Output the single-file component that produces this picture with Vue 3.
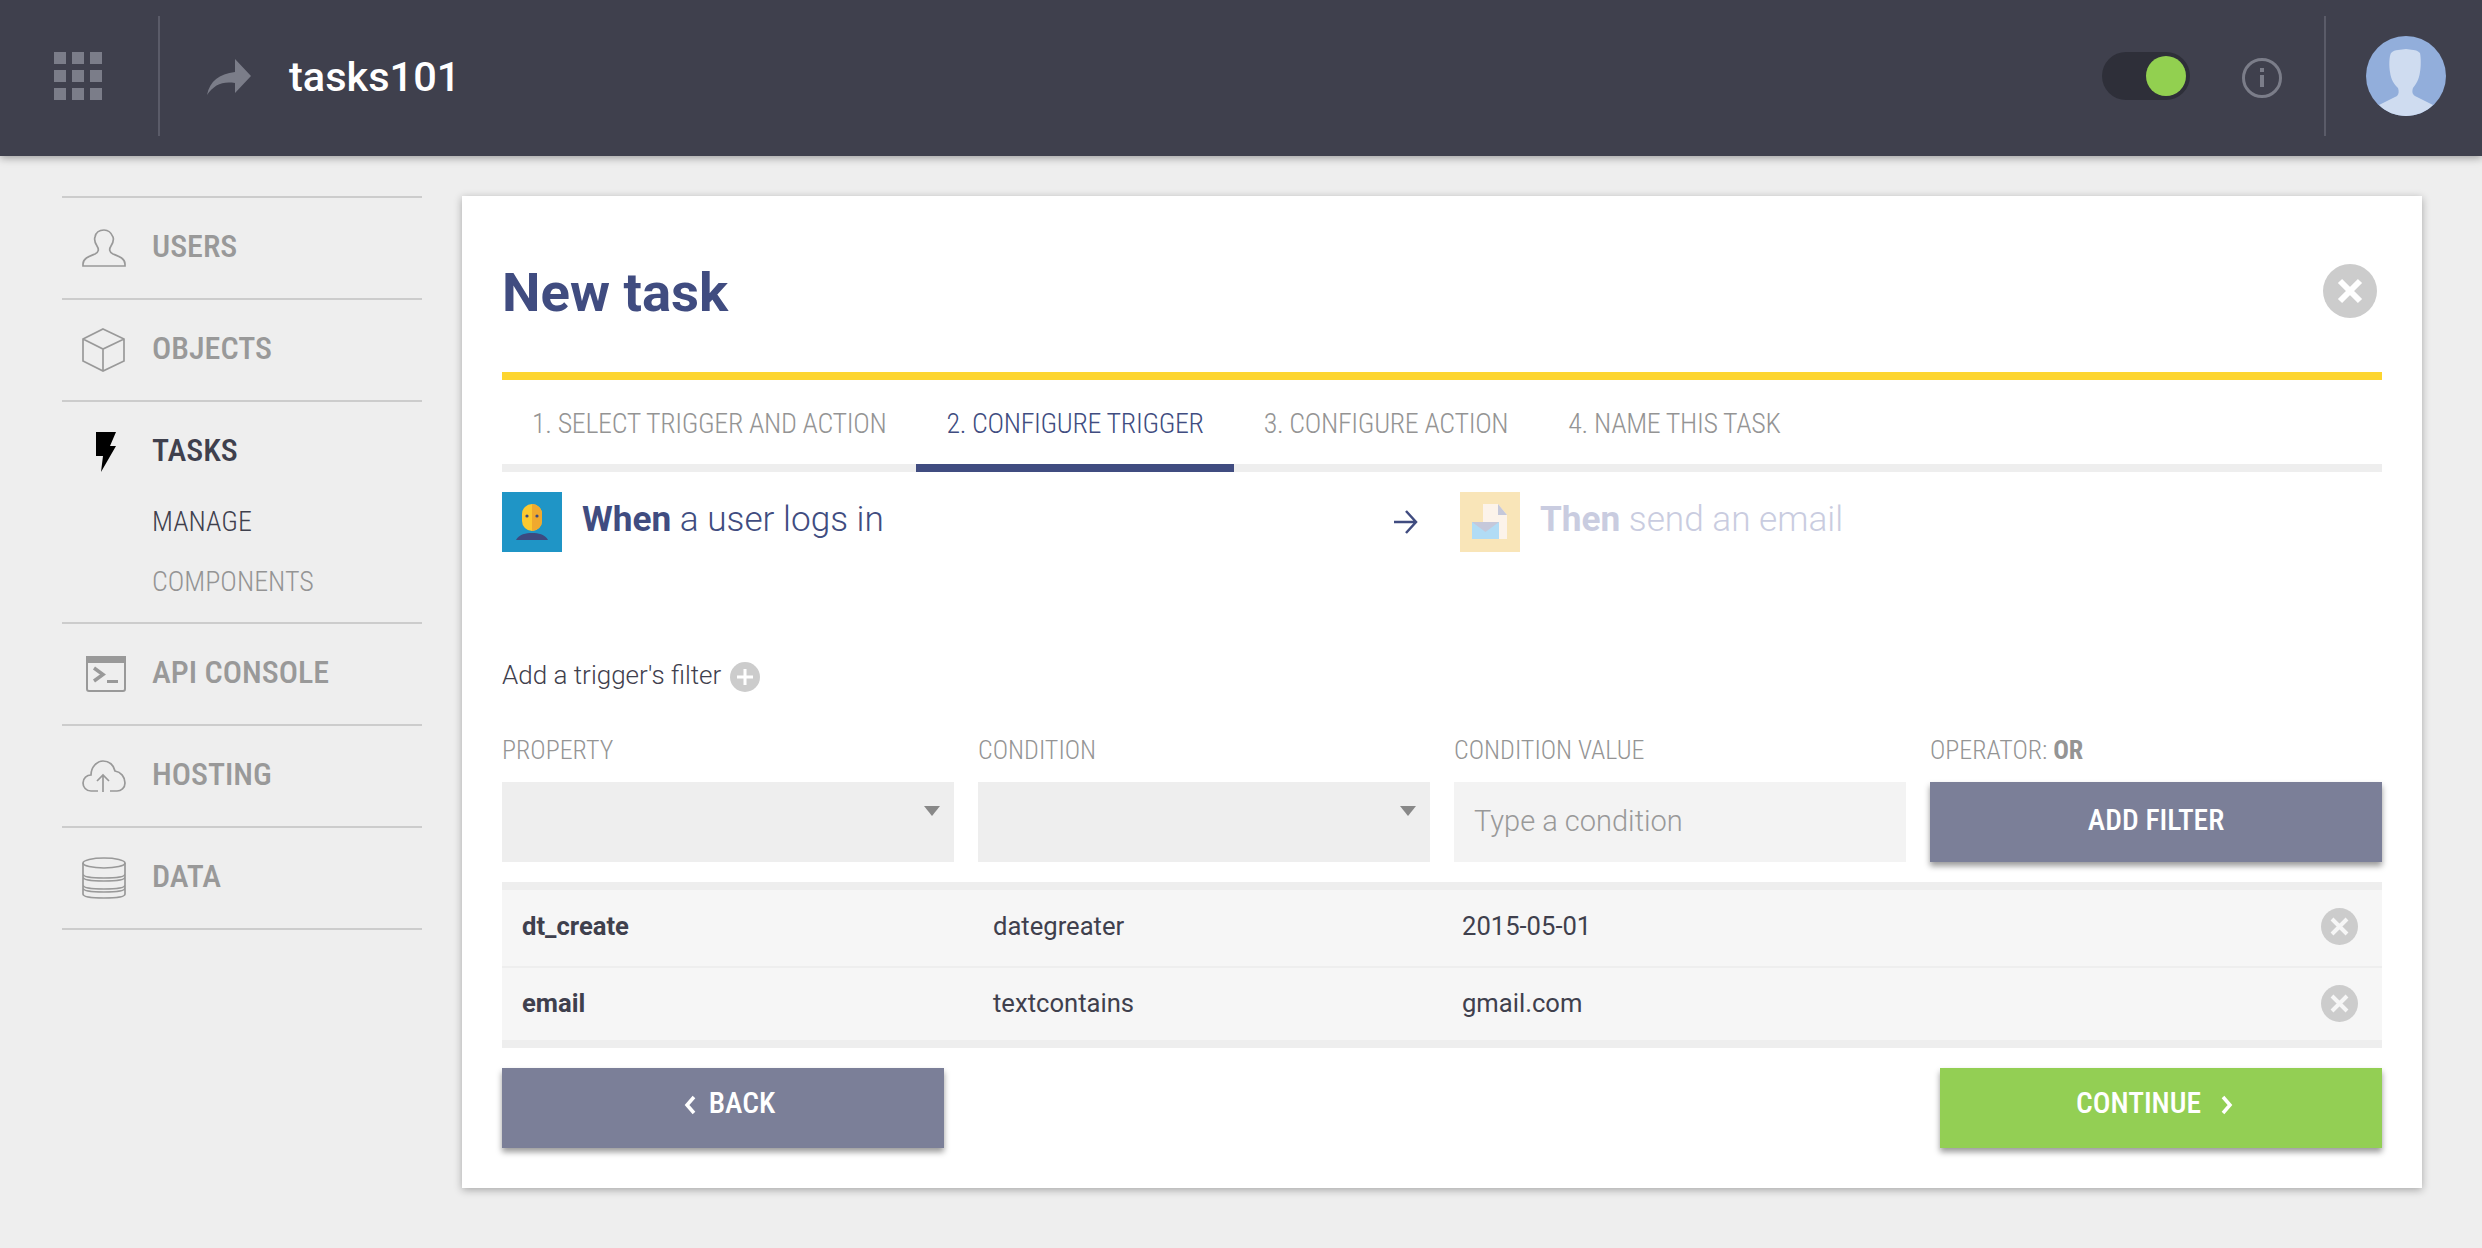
<script setup>
const rows = [
  { prop: 'dt_create', cond: 'dategreater', val: '2015-05-01' },
  { prop: 'email', cond: 'textcontains', val: 'gmail.com' }
]
const tabs = ['1. SELECT TRIGGER AND ACTION', '2. CONFIGURE TRIGGER', '3. CONFIGURE ACTION', '4. NAME THIS TASK']
</script>

<template>
  <div class="page">
    <header class="top">
      <div class="grid-btn">
        <div class="dots"><i v-for="n in 9" :key="n"></i></div>
      </div>
      <div class="crumb">
        <svg class="share" width="44" height="36" viewBox="0 0 44 36"><path d="M0 36C3 22 12 15 28 13V0L44 17 28 34V24C15 22 7 26 0 36Z" fill="#7b7d89"/></svg>
        <span class="app-name">tasks101</span>
      </div>
      <div class="toggle"><span class="knob"></span></div>
      <svg class="info" width="40" height="40" viewBox="0 0 40 40"><circle cx="20" cy="20" r="18.5" fill="none" stroke="#7b7d89" stroke-width="3"/><rect x="18" y="17" width="4" height="12" fill="#7b7d89"/><rect x="18" y="10" width="4" height="4" fill="#7b7d89"/></svg>
      <div class="user">
        <svg width="80" height="80" viewBox="0 0 80 80"><circle cx="40" cy="40" r="40" fill="#92aedb"/><path d="M13 69L31 60C33 58 33 55 32 52 28 48 25 44 24 36 23 30 23 21 25 17 29 13 35 14 40 13 45 14 50 13 54 17 55 22 55 30 54 36 53 44 50 48 47 52 46 55 46 58 49 60L67 69C60 76 50 80 40 80 30 80 20 76 13 69Z" fill="#cfdcf0"/></svg>
      </div>
    </header>

    <div class="body">
      <nav class="side">
        <div class="item">
          <svg class="ico" width="44" height="38" viewBox="0 0 44 38" fill="none" stroke="#999" stroke-width="1.7"><path d="M1 37H43V35C43 29 36 27 31 25 27 23 27 20 29 17 31 14 32 11 31 8 29 3 26 1 22 1 18 1 14 3 13 8 12 11 13 14 15 17 17 20 17 23 13 25 8 27 1 29 1 35Z"/></svg>
          <span class="label">USERS</span>
        </div>
        <div class="item">
          <svg class="ico" width="44" height="44" viewBox="0 0 44 44" fill="none" stroke="#999" stroke-width="1.7"><path d="M21 1L42 11V33L21 43 1 33V11ZM1 11L21 21 42 11M21 21V43"/></svg>
          <span class="label">OBJECTS</span>
        </div>
        <div class="item open">
          <div class="item-head">
            <svg class="ico" width="44" height="40" viewBox="0 0 44 40"><path d="M14 0H34L28 14H34L19 40 21 24H14Z" fill="#000"/></svg>
            <span class="label">TASKS</span>
          </div>
          <div class="sub active">MANAGE</div>
          <div class="sub">COMPONENTS</div>
        </div>
        <div class="item">
          <svg class="ico" width="44" height="36" viewBox="0 0 44 36" fill="none" stroke="#999" stroke-width="2"><rect x="5" y="1" width="38" height="34" rx="2"/><rect x="5" y="1" width="38" height="5" fill="#999"/><path d="M12 12L21 18.500 12 25" stroke-width="3.500"/><rect x="25" y="24" width="11" height="3" fill="#999" stroke="none"/></svg>
          <span class="label">API CONSOLE</span>
        </div>
        <div class="item">
          <svg class="ico" width="44" height="33" viewBox="0 0 44 33" fill="none" stroke="#999" stroke-width="1.7"><path d="M16 31H9C4 31 1 27 1 23 1 18 5 15 9 15 9 7 15 1 21 1 27 1 32 5 33 11 39 12 43 17 43 23 43 28 39 31 35 31H28"/><path d="M21 32V16M15 21L21 15 27 21"/></svg>
          <span class="label">HOSTING</span>
        </div>
        <div class="item">
          <svg class="ico" width="44" height="42" viewBox="0 0 44 42" fill="none" stroke="#999" stroke-width="1.7"><ellipse cx="22" cy="6" rx="21" ry="5"/><path d="M1 6V37C1 40 10 41 22 41 34 41 43 40 43 37V6M1 17C1 20 10 21 22 21 34 21 43 20 43 17M1 20C1 23 10 24 22 24 34 24 43 23 43 20M1 28C1 31 10 32 22 32 34 32 43 31 43 28M1 31C1 34 10 35 22 35 34 35 43 34 43 31"/></svg>
          <span class="label">DATA</span>
        </div>
      </nav>

      <main class="card">
        <div class="card-head">
          <h1>New task</h1>
          <svg class="close" width="54" height="54" viewBox="0 0 54 54"><circle cx="27" cy="27" r="27" fill="#ccc"/><path d="M17 17L37 37M37 17L17 37" stroke="#fff" stroke-width="6"/></svg>
        </div>
        <div class="tabs">
          <div v-for="(t, i) in tabs" :key="t" class="tab" :class="{ on: i === 1 }">{{ t }}</div>
        </div>
        <div class="flow">
          <div class="flow-left">
            <svg width="60" height="60" viewBox="0 0 60 60"><rect width="60" height="60" fill="#1f95c6"/><rect x="20" y="12" width="20" height="27" rx="10" fill="#fcc92f"/><path d="M30 12A10 10 0 0 1 40 22V29A10 10 0 0 1 30 39Z" fill="#f0a92e"/><circle cx="25" cy="24" r="1.6" fill="#3c4a80"/><circle cx="35" cy="24" r="1.6" fill="#3c4a80"/><path d="M14 48C17 42 24 41 30 41 36 41 43 42 46 48Z" fill="#3c4a80"/></svg>
            <span class="flow-text"><b>When</b> a user logs in</span>
          </div>
          <svg class="arrow" width="24" height="24" viewBox="0 0 24 24" fill="none" stroke="#404c80" stroke-width="2.500"><path d="M0 12H22M12 1L22 12 12 23"/></svg>
          <div class="flow-right">
            <svg width="60" height="60" viewBox="0 0 60 60"><rect width="60" height="60" fill="#f9e5b8"/><path d="M23 12H38L47 23V47H23Z" fill="#fcf3ea"/><path d="M38 12L47 23H38Z" fill="#c5c8da"/><rect x="12" y="30" width="27" height="17" fill="#b1dcf5"/><path d="M12 30H39L25.500 40Z" fill="#c5c8da"/></svg>
            <span class="flow-text dim"><b>Then</b> send an email</span>
          </div>
        </div>
        <div class="add-line">
          <span>Add a trigger's filter</span>
          <svg width="30" height="30" viewBox="0 0 30 30"><circle cx="15" cy="15" r="15" fill="#ccc"/><path d="M15 7V23M7 15H23" stroke="#fff" stroke-width="3"/></svg>
        </div>
        <div class="form">
          <div class="field">
            <label>PROPERTY</label>
            <div class="box select"><i class="caret"></i></div>
          </div>
          <div class="field">
            <label>CONDITION</label>
            <div class="box select"><i class="caret"></i></div>
          </div>
          <div class="field">
            <label>CONDITION VALUE</label>
            <div class="box input">Type a condition</div>
          </div>
          <div class="field">
            <label>OPERATOR: <b>OR</b></label>
            <button class="btn gray add">ADD FILTER</button>
          </div>
        </div>
        <div class="table">
          <div v-for="r in rows" :key="r.prop" class="row">
            <b class="c1">{{ r.prop }}</b>
            <span class="c2">{{ r.cond }}</span>
            <span class="c3">{{ r.val }}</span>
            <svg class="del" width="37" height="37" viewBox="0 0 37 37"><circle cx="18.500" cy="18.500" r="18.500" fill="#ccc"/><path d="M11 11L26 26M26 11L11 26" stroke="#f6f6f6" stroke-width="4"/></svg>
          </div>
        </div>
        <div class="actions">
          <button class="btn gray wide back">
            <svg width="12" height="20" viewBox="0 0 12 20" fill="none" stroke="#fff" stroke-width="3.500"><path d="M10 2L3 10 10 18"/></svg>
            <span>BACK</span>
          </button>
          <button class="btn green wide next">
            <span>CONTINUE</span>
            <svg width="12" height="20" viewBox="0 0 12 20" fill="none" stroke="#fff" stroke-width="3.500"><path d="M2 2L9 10 2 18"/></svg>
          </button>
        </div>
      </main>
    </div>
  </div>
</template>

<style>
html, body { margin: 0; background: #eee; }
</style>

<style scoped>
.page {
  width: 2482px;
  height: 1248px;
  background: #eee;
  font-family: "Roboto", "Liberation Sans", sans-serif;
  overflow: hidden;
  --cond: "Roboto Condensed", "Roboto", sans-serif;
}
.top {
  height: 156px;
  box-sizing: border-box;
  padding-bottom: 4px;
  background: #3f404d;
  display: flex;
  align-items: center;
  box-shadow: 0 2px 8px rgba(0, 0, 0, .35);
  position: relative;
}
.grid-btn {
  height: 120px;
  border-right: 2px solid #5a5b68;
  display: flex;
  align-items: center;
  padding-left: 54px;
  width: 104px;
}
.dots { display: grid; grid-template-columns: repeat(3, 12px); grid-auto-rows: 12px; gap: 6px; }
.dots i { background: #7b7d89; display: block; }
.crumb { display: flex; align-items: center; margin-left: 47px; flex: 1; }
.share { margin-top: 2px; }
.app-name { color: #fff; font-size: 41.500px; margin-left: 38px; font-weight: 500; }
.toggle {
  width: 88px;
  height: 48px;
  border-radius: 24px;
  background: #2e2f39;
  position: relative;
}
.knob {
  position: absolute;
  right: 4px;
  top: 4px;
  width: 40px;
  height: 40px;
  border-radius: 50%;
  background: #92d050;
}
.info { margin-left: 52px; margin-top: 4px; }
.user {
  margin-left: 42px;
  height: 120px;
  border-left: 2px solid #5a5b68;
  padding-left: 40px;
  padding-right: 36px;
  display: flex;
  align-items: center;
}
.body { display: flex; align-items: flex-start; padding: 40px 60px 0 62px; }
.side { width: 360px; border-top: 2px solid #ccc; margin-right: 40px; }
.item {
  min-height: 100px;
  border-bottom: 2px solid #ccc;
  display: flex;
  align-items: center;
  padding-left: 20px;
}
.item.open { display: block; height: 220px; }
.item-head { display: flex; align-items: center; height: 100px; margin-bottom: -10px; }
.ico { width: 44px; flex: none; }
.label {
  font-family: var(--cond);
  font-stretch: 75%;
  font-size: 32px;
  font-weight: 500;
  color: #999;
  margin-left: 26px;
  margin-bottom: 4px;
}
.open .label { color: #3f404d; }
.sub {
  font-family: var(--cond);
  font-stretch: 75%;
  font-size: 28px;
  font-weight: 300;
  color: #949494;
  padding-left: 70px;
  height: 60px;
  line-height: 60px;
}
.sub.active { color: #3f404d; }
.card {
  flex: 1;
  height: 992px;
  background: #fff;
  box-shadow: 0 2px 8px rgba(0, 0, 0, .3);
  padding: 0 40px;
  box-sizing: border-box;
}
.card-head {
  height: 176px;
  box-sizing: content-box;
  border-bottom: 8px solid #fdd52f;
  display: flex;
  align-items: center;
  justify-content: space-between;
}
h1 { margin: 16px 0 0; font-size: 54.500px; font-weight: 700; color: #404c80; }
.close { margin: 14px 5px 0 0; }
.tabs { display: flex; border-bottom: 8px solid #eee; height: 84px; }
.tab {
  font-family: var(--cond);
  font-stretch: 75%;
  font-size: 28px;
  font-weight: 300;
  letter-spacing: -.33px;
  color: #949494;
  padding: 0 30px;
  line-height: 88px;
  height: 84px;
}
.tab.on { color: #404c80; border-bottom: 8px solid #404c80; }
.flow { display: flex; align-items: center; margin-top: 20px; height: 60px; }
.flow-left { display: flex; align-items: center; width: 892px; }
.flow-right { display: flex; align-items: center; margin-left: 42px; }
.flow-text { font-size: 35.200px; font-weight: 300; color: #404c80; margin-left: 20px; padding-bottom: 6px; }
.flow-text b { font-weight: 700; }
.flow-text.dim { color: #c9cce0; }
.add-line {
  display: flex;
  align-items: center;
  gap: 9px;
  margin-top: 110px;
  font-size: 26px;
  font-weight: 300;
  color: #3f404d;
  height: 30px;
}
.add-line span { padding-bottom: 4px; }
.form { display: grid; grid-template-columns: repeat(4, 452px); gap: 24px; margin-top: 42px; }
.field label {
  display: block;
  font-family: var(--cond);
  font-stretch: 75%;
  font-size: 26px;
  font-weight: 300;
  color: #949494;
  height: 32px;
  line-height: 32px;
  margin-bottom: 16px;
}
.field label b { font-weight: 700; }
.box { height: 80px; background: #eee; position: relative; }
.input {
  background: #f3f3f3;
  color: #999;
  font-size: 29px;
  font-weight: 300;
  line-height: 78px;
  padding-left: 20px;
}
.caret {
  position: absolute;
  right: 14px;
  top: 24px;
  border-left: 8px solid transparent;
  border-right: 8px solid transparent;
  border-top: 10px solid #888;
}
.btn {
  display: flex;
  align-items: center;
  justify-content: center;
  box-sizing: border-box;
  height: 80px;
  width: 100%;
  border: 0;
  color: #fff;
  font-family: var(--cond);
  font-stretch: 75%;
  font-size: 29.500px;
  font-weight: 500;
  box-shadow: 0 4px 6px rgba(0, 0, 0, .4);
  padding: 0;
}
.add { padding-bottom: 4px; }
.gray { background: #7b7f98; }
.green { background: #93cf54; }
.wide { width: 442px; padding-bottom: 10px; }
.wide svg { margin-top: 4px; }
.back { gap: 13px; padding-left: 13px; }
.next { gap: 20px; padding-right: 13px; }
.table { margin-top: 20px; border-top: 8px solid #eee; border-bottom: 8px solid #eee; }
.row {
  display: flex;
  align-items: center;
  background: #f6f6f6;
  height: 72px;
  padding-bottom: 4px;
  font-size: 25.600px;
  color: #3f404d;
  padding-left: 20px;
}
.row + .row { border-top: 2px solid #eee; height: 70px; padding-bottom: 2px; }
.c1 { width: 471px; font-weight: 700; }
.c2 { width: 469px; }
.c3 { flex: 1; }
.del { margin-right: 24px; }
.actions { display: flex; justify-content: space-between; margin-top: 20px; }
</style>
